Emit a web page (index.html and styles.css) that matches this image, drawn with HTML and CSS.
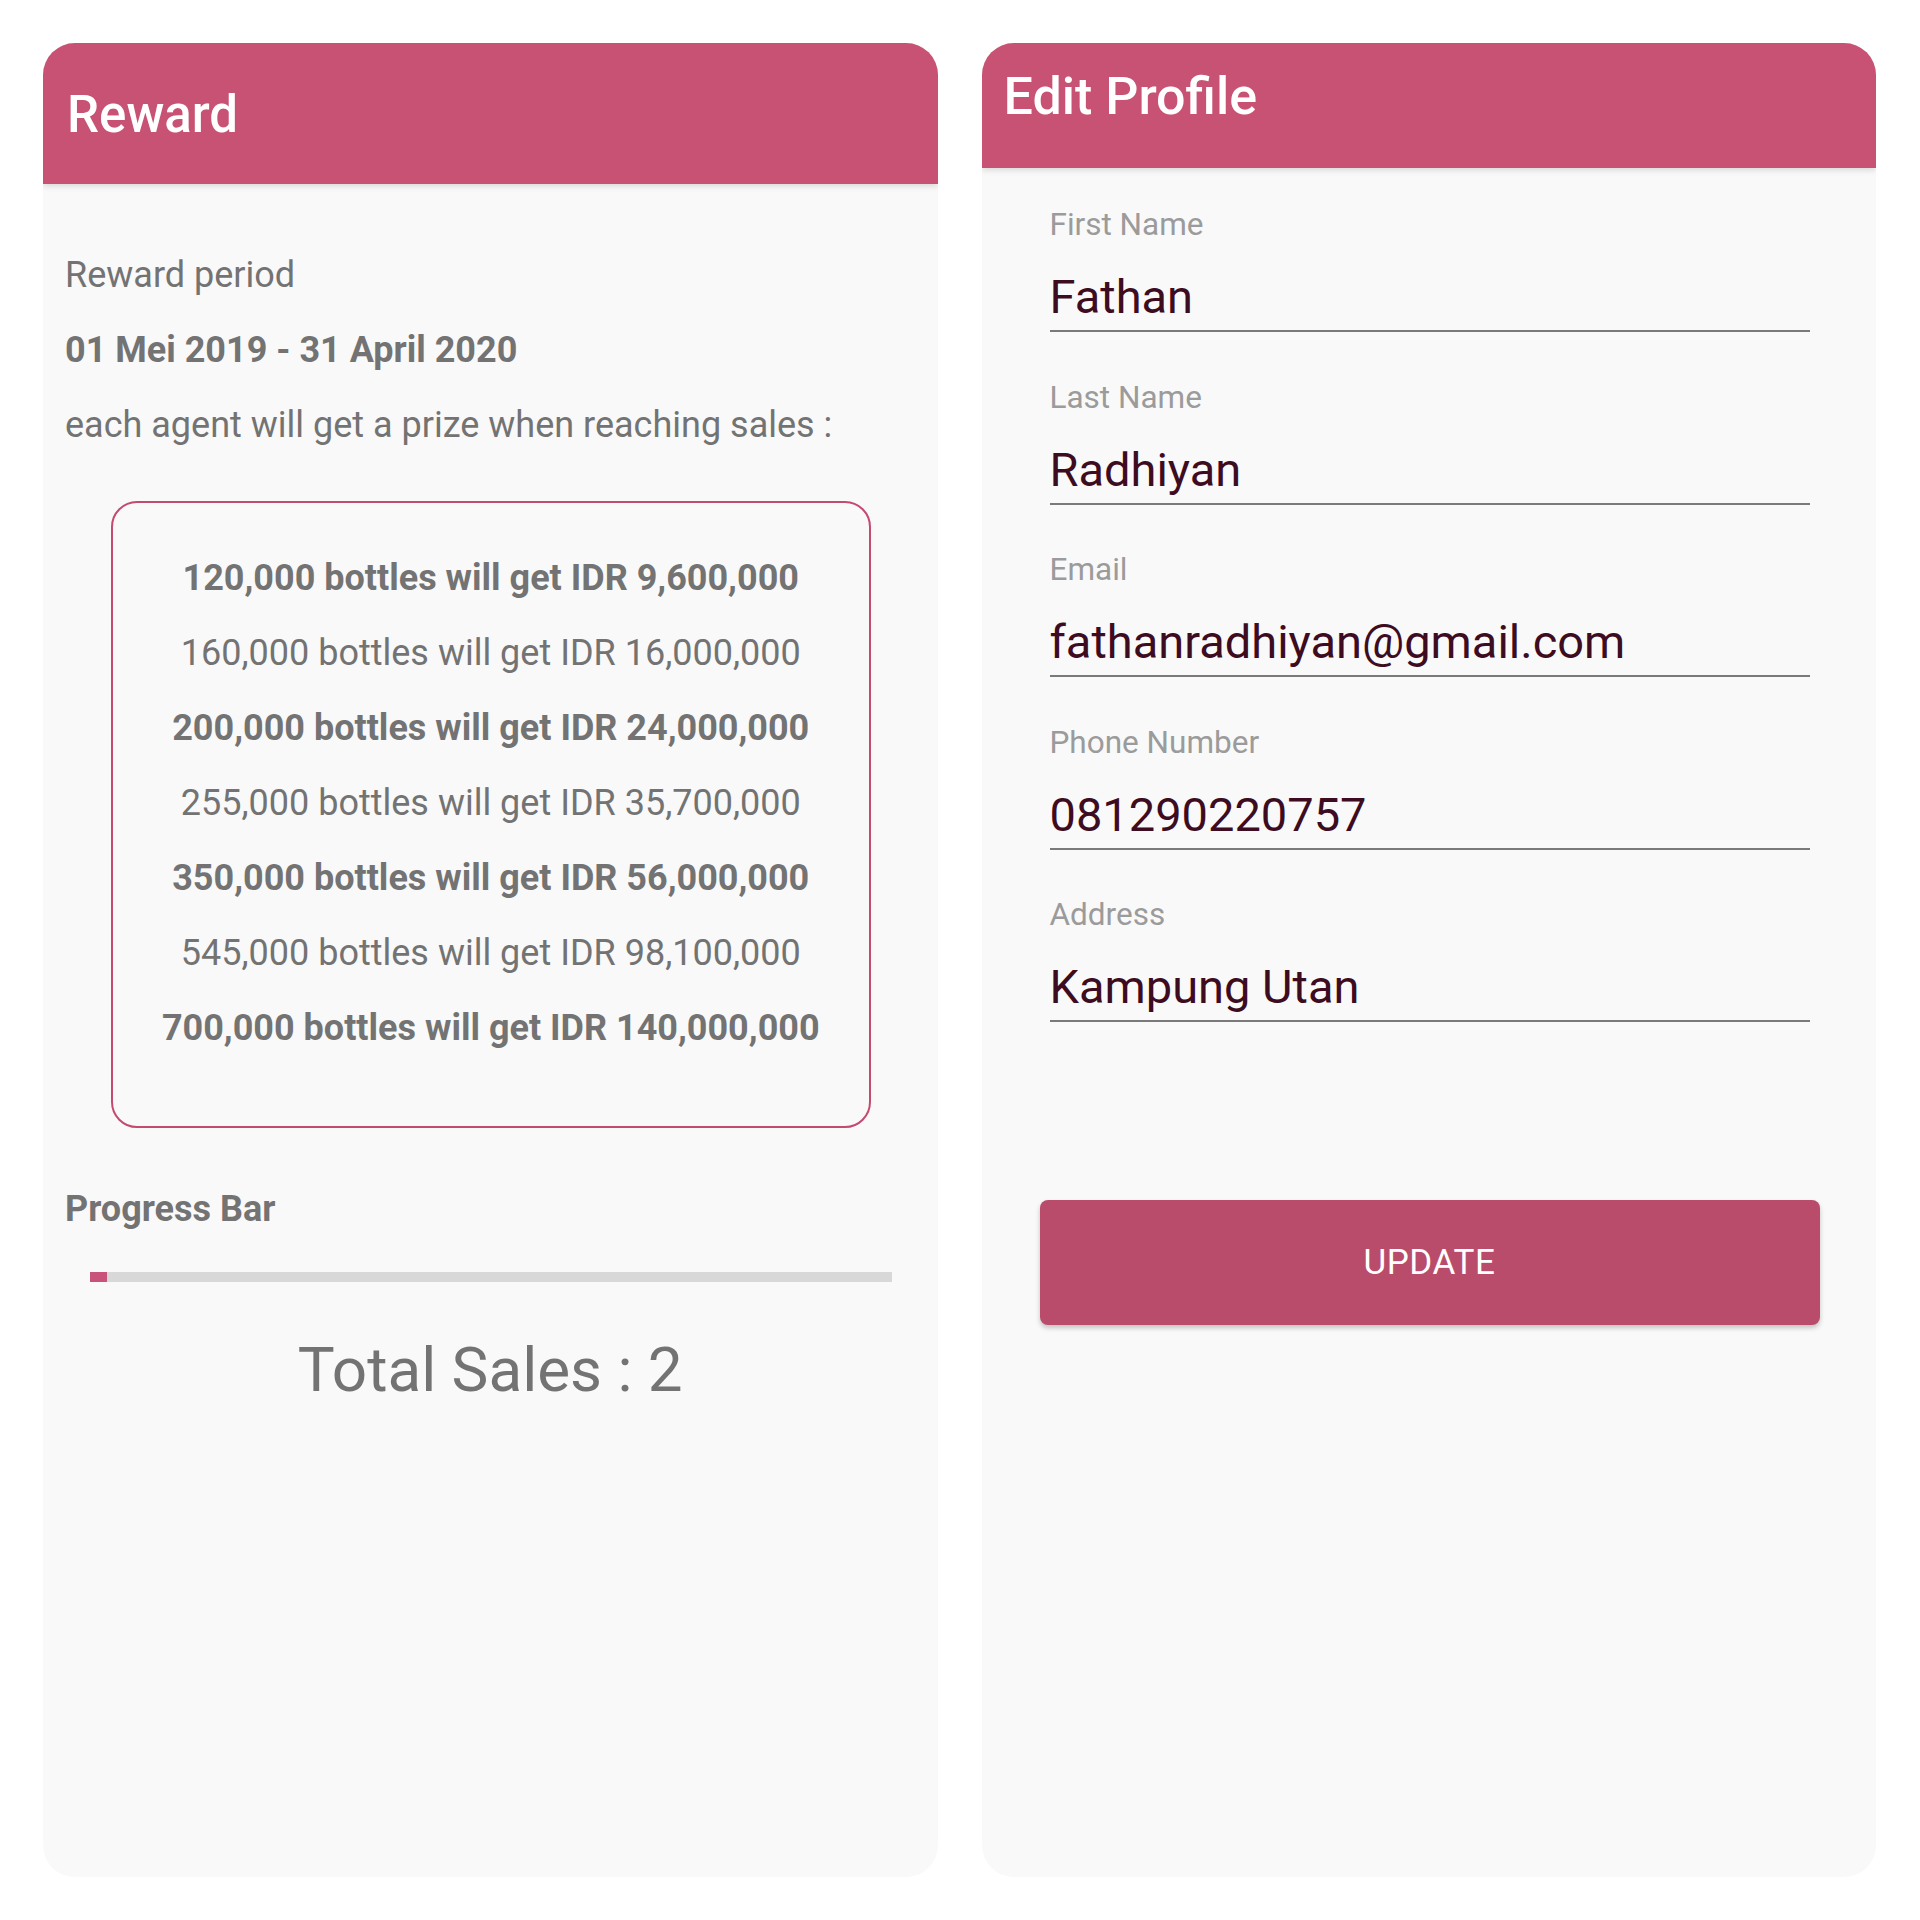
FILE: index.html
```html
<!DOCTYPE html>
<html lang="en">
<head>
<meta charset="utf-8">
<title>Reward / Edit Profile</title>
<link rel="stylesheet" href="styles.css">
</head>
<body>
<div class="screens">
  <section class="card">
    <header class="appbar appbar-reward"><h1 class="appbar-title">Reward</h1></header>
    <div class="reward-body">
      <p class="txt">Reward period</p>
      <p class="txt bold">01 Mei 2019 - 31 April 2020</p>
      <p class="txt">each agent will get a prize when reaching sales :</p>
      <div class="prize-box">
        <p class="prize bold">120,000 bottles will get IDR 9,600,000</p>
        <p class="prize">160,000 bottles will get IDR 16,000,000</p>
        <p class="prize bold">200,000 bottles will get IDR 24,000,000</p>
        <p class="prize">255,000 bottles will get IDR 35,700,000</p>
        <p class="prize bold">350,000 bottles will get IDR 56,000,000</p>
        <p class="prize">545,000 bottles will get IDR 98,100,000</p>
        <p class="prize bold">700,000 bottles will get IDR 140,000,000</p>
      </div>
      <p class="txt bold progress-title">Progress Bar</p>
      <div class="progress"><div class="progress-fill"></div></div>
      <p class="total">Total Sales : 2</p>
    </div>
  </section>

  <section class="card">
    <header class="appbar appbar-profile"><h1 class="appbar-title">Edit Profile</h1></header>
    <div class="profile-body">
      <div class="field">
        <div class="field-label">First Name</div>
        <div class="field-value">Fathan</div>
      </div>
      <div class="field">
        <div class="field-label">Last Name</div>
        <div class="field-value">Radhiyan</div>
      </div>
      <div class="field">
        <div class="field-label">Email</div>
        <div class="field-value">fathanradhiyan@gmail.com</div>
      </div>
      <div class="field">
        <div class="field-label">Phone Number</div>
        <div class="field-value">081290220757</div>
      </div>
      <div class="field">
        <div class="field-label">Address</div>
        <div class="field-value">Kampung Utan</div>
      </div>
      <button class="update-btn" type="button">UPDATE</button>
    </div>
  </section>
</div>
</body>
</html>
```

FILE: styles.css
```css
* { box-sizing: border-box; }

html, body {
  margin: 0;
  padding: 0;
  background: #ffffff;
}

body {
  font-family: Roboto, "Liberation Sans", Arial, sans-serif;
  width: 1920px;
  height: 1920px;
}

.screens {
  display: flex;
  gap: 44px;
  padding: 43px 44px 0 43px;
}

.card {
  width: 895px;
  height: 1834px;
  background: #f9f9f9;
  border-radius: 32px;
  overflow: hidden;
  display: flex;
  flex-direction: column;
}

.appbar {
  background: #c85273;
  box-shadow: 0 2px 6px rgba(0, 0, 0, 0.14);
  padding-left: 24px;
  flex: none;
}

.appbar-title {
  margin: 0;
  color: #ffffff;
  font-size: 52px;
  line-height: 60px;
  font-weight: 500;
}

.appbar-reward {
  height: 141px;
  padding-top: 42px;
}

.appbar-reward .appbar-title {
  font-size: 51px;
}

.appbar-profile {
  height: 125px;
  padding-top: 24px;
  padding-left: 22px;
}

/* Reward */
.reward-body {
  padding: 70px 22px 0 22px;
}

.txt {
  margin: 0 0 33px 0;
  font-size: 36px;
  line-height: 42px;
  color: #737373;
}

.bold { font-weight: 700; }

.prize-box {
  margin: 55px 45px 0 46px;
  height: 627px;
  border: 2px solid #c44a70;
  border-radius: 26px;
  padding-top: 38px;
}

.prize {
  margin: 0;
  text-align: center;
  font-size: 36px;
  line-height: 75px;
  color: #737373;
}

.progress-title {
  margin: 60px 0 0 0;
}

.progress {
  margin: 42px 24px 0 25px;
  height: 10px;
  background: #d8d8d8;
}

.progress-fill {
  width: 17px;
  height: 100%;
  background: #c9527a;
}

.total {
  margin: 51px 0 0 0;
  text-align: center;
  font-size: 62px;
  color: #737373;
}

/* Edit profile */
.profile-body {
  padding: 39px 0 0 0;
}

.field {
  margin: 0 66px 47.5px 68px;
}

.field-label {
  font-size: 31.5px;
  line-height: 35px;
  color: #9b9b9b;
}

.field-value {
  margin-top: 28px;
  font-size: 47px;
  line-height: 53px;
  color: #3d0c21;
  padding-bottom: 7px;
  border-bottom: 2px solid #7a7a7a;
}

.update-btn {
  display: block;
  margin: 178px 56px 0 58px;
  width: 780px;
  height: 125px;
  border: none;
  border-radius: 8px;
  background: #b94c6b;
  color: #ffffff;
  font-family: Roboto, "Liberation Sans", Arial, sans-serif;
  font-size: 35px;
  letter-spacing: 0.5px;
  box-shadow: 0 3px 5px rgba(0, 0, 0, 0.22);
}
```
